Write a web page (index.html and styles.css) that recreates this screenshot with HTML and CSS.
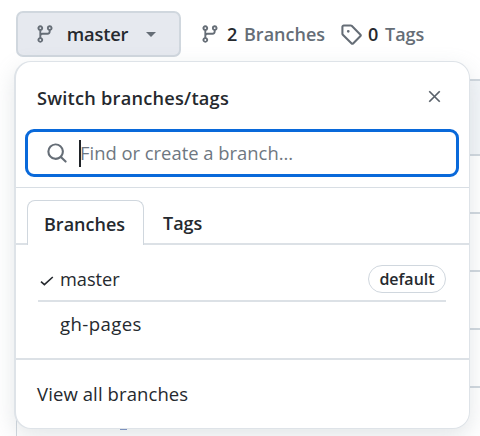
FILE: index.html
```html
<!DOCTYPE html>
<html lang="en">
<head>
<meta charset="utf-8">
<title>Switch branches/tags</title>
<link rel="stylesheet" href="styles.css">
</head>
<body>
<header class="toolbar">
  <button class="branch-button">
    <svg class="icon" viewBox="0 0 16 16"><path d="M9.5 3.25a2.25 2.25 0 1 1 3 2.122V6A2.5 2.5 0 0 1 10 8.5H6a1 1 0 0 0-1 1v1.128a2.251 2.251 0 1 1-1.5 0V5.372a2.25 2.25 0 1 1 1.5 0v1.836A2.493 2.493 0 0 1 6 7h4a1 1 0 0 0 1-1v-.628A2.25 2.25 0 0 1 9.5 3.25Zm-6 0a.75.75 0 1 0 1.5 0 .75.75 0 0 0-1.5 0Zm8.25-.75a.75.75 0 1 0 0 1.5.75.75 0 0 0 0-1.5ZM4.25 12a.75.75 0 1 0 0 1.5.75.75 0 0 0 0-1.5Z"/></svg>
    <span class="branch-name">master</span>
    <span class="caret"></span>
  </button>
  <a class="stat stat-branches">
    <svg class="icon" viewBox="0 0 16 16"><path d="M9.5 3.25a2.25 2.25 0 1 1 3 2.122V6A2.5 2.5 0 0 1 10 8.5H6a1 1 0 0 0-1 1v1.128a2.251 2.251 0 1 1-1.5 0V5.372a2.25 2.25 0 1 1 1.5 0v1.836A2.493 2.493 0 0 1 6 7h4a1 1 0 0 0 1-1v-.628A2.25 2.25 0 0 1 9.5 3.25Zm-6 0a.75.75 0 1 0 1.5 0 .75.75 0 0 0-1.5 0Zm8.25-.75a.75.75 0 1 0 0 1.5.75.75 0 0 0 0-1.5ZM4.25 12a.75.75 0 1 0 0 1.5.75.75 0 0 0 0-1.5Z"/></svg>
    <strong>2</strong><span class="stat-label">Branches</span>
  </a>
  <a class="stat stat-tags">
    <svg class="icon" viewBox="0 0 16 16"><path d="M1 7.775V2.75C1 1.784 1.784 1 2.75 1h5.025c.464 0 .91.184 1.238.513l6.25 6.25a1.75 1.75 0 0 1 0 2.474l-5.026 5.026a1.75 1.75 0 0 1-2.474 0l-6.25-6.25A1.752 1.752 0 0 1 1 7.775Zm1.5 0c0 .066.026.13.073.177l6.25 6.25a.25.25 0 0 0 .354 0l5.025-5.025a.25.25 0 0 0 0-.354l-6.25-6.25a.25.25 0 0 0-.177-.073H2.75a.25.25 0 0 0-.25.25ZM6 5a1 1 0 1 1 0 2 1 1 0 0 1 0-2Z"/></svg>
    <strong>0</strong><span class="stat-label">Tags</span>
  </a>
</header>

<main class="file-table">
  <div class="file-head"></div>
  <div class="file-row"></div>
  <div class="file-row"></div>
  <div class="file-row"></div>
  <div class="file-row"></div>
  <div class="file-last"><span class="link-edge"></span></div>
</main>

<section class="popover">
  <div class="popover-head">
    <h2 class="title">Switch branches/tags</h2>
    <svg class="close" viewBox="0 0 16 16"><path d="M2.4 2.4l11.2 11.2M13.6 2.4L2.4 13.6"/></svg>
  </div>
  <div class="search">
    <svg class="search-icon" viewBox="0 0 16 16"><path d="M10.68 11.74a6 6 0 0 1-7.922-8.982 6 6 0 0 1 8.982 7.922l3.04 3.04a.749.749 0 1 1-1.06 1.06ZM11.5 7a4.499 4.499 0 1 0-8.997 0A4.499 4.499 0 0 0 11.5 7Z"/></svg>
    <span class="cursor"></span>
    <span class="placeholder">Find or create a branch...</span>
  </div>
  <nav class="tabs">
    <span class="tab tab-active">Branches</span>
    <span class="tab">Tags</span>
  </nav>
  <div class="list">
    <div class="item item-selected">
      <svg class="check" viewBox="0 0 14 10"><path d="M1 5.6l3.4 3.1L12.8 1"/></svg>
      <span class="item-name">master</span>
      <span class="badge">default</span>
    </div>
    <div class="item">
      <span class="item-name name-pages">gh-pages</span>
    </div>
  </div>
  <footer class="popover-foot"><span>View all branches</span></footer>
</section>
</body>
</html>
```
FILE: styles.css
```css
* { box-sizing: border-box; }

body {
  margin: 0;
  width: 480px;
  height: 436px;
  overflow: hidden;
  position: relative;
  background: #fff;
  color: #25292e;
  font-family: "Open Sans", "Noto Sans", sans-serif;
  font-size: 18px;
  line-height: 24px;
}

.toolbar {
  display: flex;
  align-items: center;
  height: 79px;
  padding: 11px 0 22px 16px;
}

.icon { width: 20px; height: 20px; fill: #656d76; flex: none; }

.branch-button {
  display: flex;
  align-items: center;
  width: 165px;
  height: 46px;
  padding: 0 0 0 17px;
  border: 2px solid #d0d7de;
  border-radius: 7px;
  background: #e6e9ef;
  color: #25292e;
  font: 600 18.3px/24px "Open Sans", sans-serif;
}
.branch-name { margin-left: 11px; width: 63px; letter-spacing: -0.15px; }
.caret {
  margin-left: 17px;
  border: 5px solid transparent;
  border-top-color: #656d76;
  border-bottom: 0;
}

.stat { display: flex; align-items: center; }
.stat strong { font-weight: 600; margin-left: 7px; width: 11px; }
.stat-label { margin-left: 6px; font-weight: 600; color: #656d76; }
.stat-branches { margin-left: 19px; width: 140px; letter-spacing: 0; }
.stat-tags .icon { width: 22px; height: 22px; }
.stat-tags strong { margin-left: 6px; }

.file-table {
  height: 357px;
  margin-left: 16px;
  border-top: 2px solid #d0d7de;
  border-left: 1px solid #d0d7de;
}
.file-head { height: 75px; background: #f3f6f9; border-bottom: 2px solid #d0d7de; }
.file-row { height: 58px; border-bottom: 2px solid #d0d7de; }
.file-last { display: flex; height: 48px; padding: 40px 0 0 103px; }
.link-edge { width: 7px; height: 2px; background: #7b91c4; }

.popover {
  position: absolute;
  left: 14px;
  top: 61px;
  width: 456px;
  height: 368px;
  display: flex;
  flex-direction: column;
  border: 1px solid #dee3e8;
  border-left-width: 2px;
  border-radius: 17px;
  background: #fff;
  box-shadow: 0 8px 22px rgba(140, 149, 159, 0.24);
}

.popover-head {
  display: flex;
  align-items: center;
  justify-content: space-between;
  height: 67px;
  padding: 5px 27px 0 21px;
}
.title { margin: 0; font-size: 18.2px; font-weight: 600; letter-spacing: 0.23px; }
.close { width: 15px; height: 15px; margin-top: -4px; fill: none; stroke: #59616a; stroke-width: 1.8; }

.search {
  display: flex;
  align-items: center;
  height: 48px;
  margin: 0 10px 10px 9px;
  padding-left: 18px;
  border: 3px solid #0969da;
  border-radius: 9px;
}
.search-icon { width: 22px; height: 22px; fill: #656d76; }
.cursor { width: 2px; height: 27px; margin-left: 11px; background: #1f2328; }
.placeholder { margin-left: -1px; color: #6e7781; font-size: 18.4px; }

.tabs {
  display: flex;
  align-items: flex-end;
  height: 58px;
  padding-left: 11px;
  border-top: 1px solid #d8dee4;
  border-bottom: 2px solid #dce1e6;
}
.tab {
  height: 45px;
  padding: 11px 16px 0;
  font-size: 18px;
  font-weight: 600;
}
.tab-active {
  width: 117px;
  margin-bottom: -2px;
  border: 1px solid #d0d7de;
  border-bottom: 0;
  border-radius: 8px 8px 0 0;
  background: #fff;
}
.tab:last-child { height: 43px; padding-left: 19px; }

.list {
  height: 115px;
  padding: 12px 23px 0 22px;
  border-bottom: 2px solid #dce1e6;
}
.item { display: flex; align-items: center; height: 45px; padding: 0 0 2px 22px; }
.item-selected { padding: 0 0 0 2px; border-bottom: 2px solid #dce1e6; }
.check { width: 14px; height: 10px; margin: 5px 6px 0 0; fill: none; stroke: #25292e; stroke-width: 1.6; }
.item-name { font-size: 18.2px; }
.name-pages { font-size: 18.6px; letter-spacing: 0.4px; }
.badge {
  width: 78px;
  height: 28px;
  margin-left: auto;
  border: 1px solid #d0d7de;
  border-radius: 14px;
  text-align: center;
  font-size: 16px;
  font-weight: 600;
  line-height: 27px;
}

.popover-foot { display: flex; align-items: center; flex: 1; padding: 0 0 1px 21px; font-size: 18.5px; letter-spacing: 0.1px; }
```
